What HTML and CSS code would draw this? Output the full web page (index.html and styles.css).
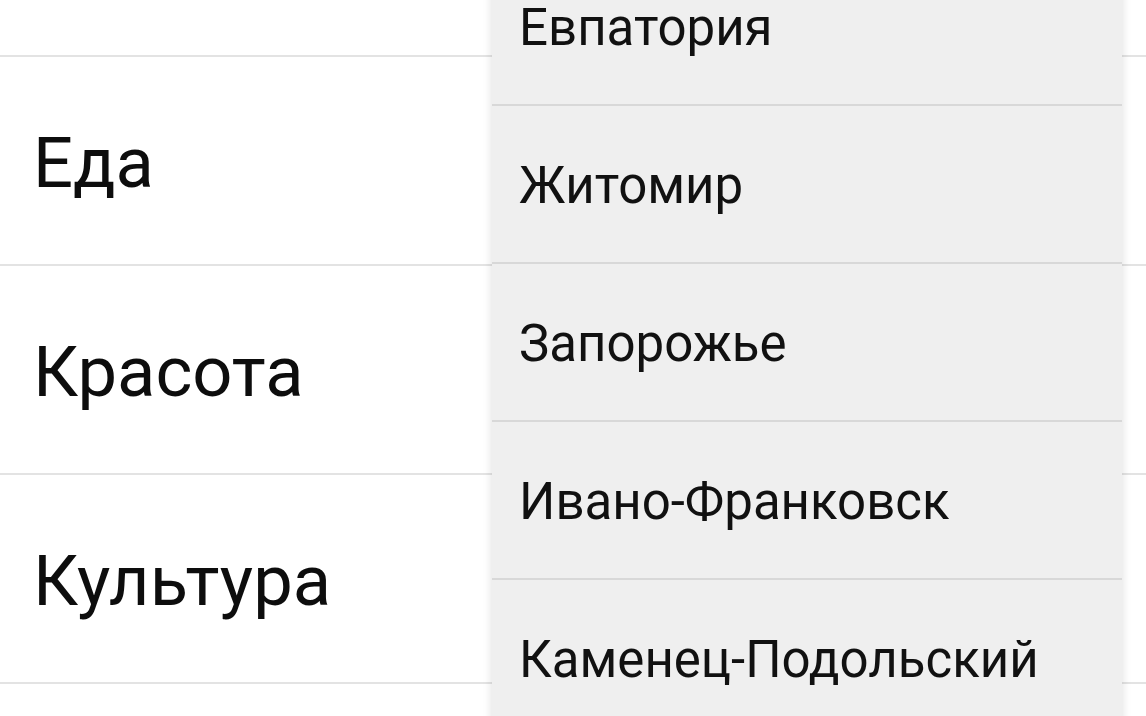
FILE: index.html
```html
<!DOCTYPE html>
<html>
	<head>
		<meta charset="UTF-8">
		<title>Категории</title>
		<link rel="stylesheet" href="styles.css">
	</head>
	<body>
		<div class="screen">
			<ul class="list">
				<li class="row"></li>
				<li class="row"><span>Еда</span></li>
				<li class="row"><span>Красота</span></li>
				<li class="row"><span>Культура</span></li>
				<li class="row"></li>
			</ul>

			<!-- city dropdown, open over the list -->
			<ul class="menu">
				<li>Евпатория</li>
				<li>Житомир</li>
				<li>Запорожье</li>
				<li>Ивано-Франковск</li>
				<li>Каменец-Подольский</li>
			</ul>
		</div>
	</body>
</html>
```

FILE: styles.css
```css
html {
	background-color: #FFFFFF;
	color: #0D0D0D;
	font-family: Roboto, "Noto Sans", sans-serif;
}
body {
	margin: 0;
	overflow: hidden;
}
.screen {
	position: relative;
	width: 1146px;
	height: 716px;
	overflow: hidden;
}
.list {
	list-style: none;
	margin: -152px 0 0 0;
	padding: 0;
}
.row {
	display: flex;
	align-items: center;
	height: 203px;
	padding: 4px 0 0 33px;
	border-bottom: 2px solid #E3E3E3;
	font-size: 70.5px;
}
.menu {
	position: absolute;
	top: -52px;
	left: 492px;
	width: 630px;
	margin: 0;
	padding: 0;
	list-style: none;
	background-color: #EFEFEF;
	box-shadow: 0 0 9px rgba(0, 0, 0, 0.14);
}
.menu li {
	display: flex;
	align-items: center;
	height: 156px;
	padding: 2px 0 0 27px;
	border-bottom: 2px solid #D8D8D8;
	box-sizing: content-box;
	height: 154px;
	font-size: 51px;
	color: #111111;
}
```
